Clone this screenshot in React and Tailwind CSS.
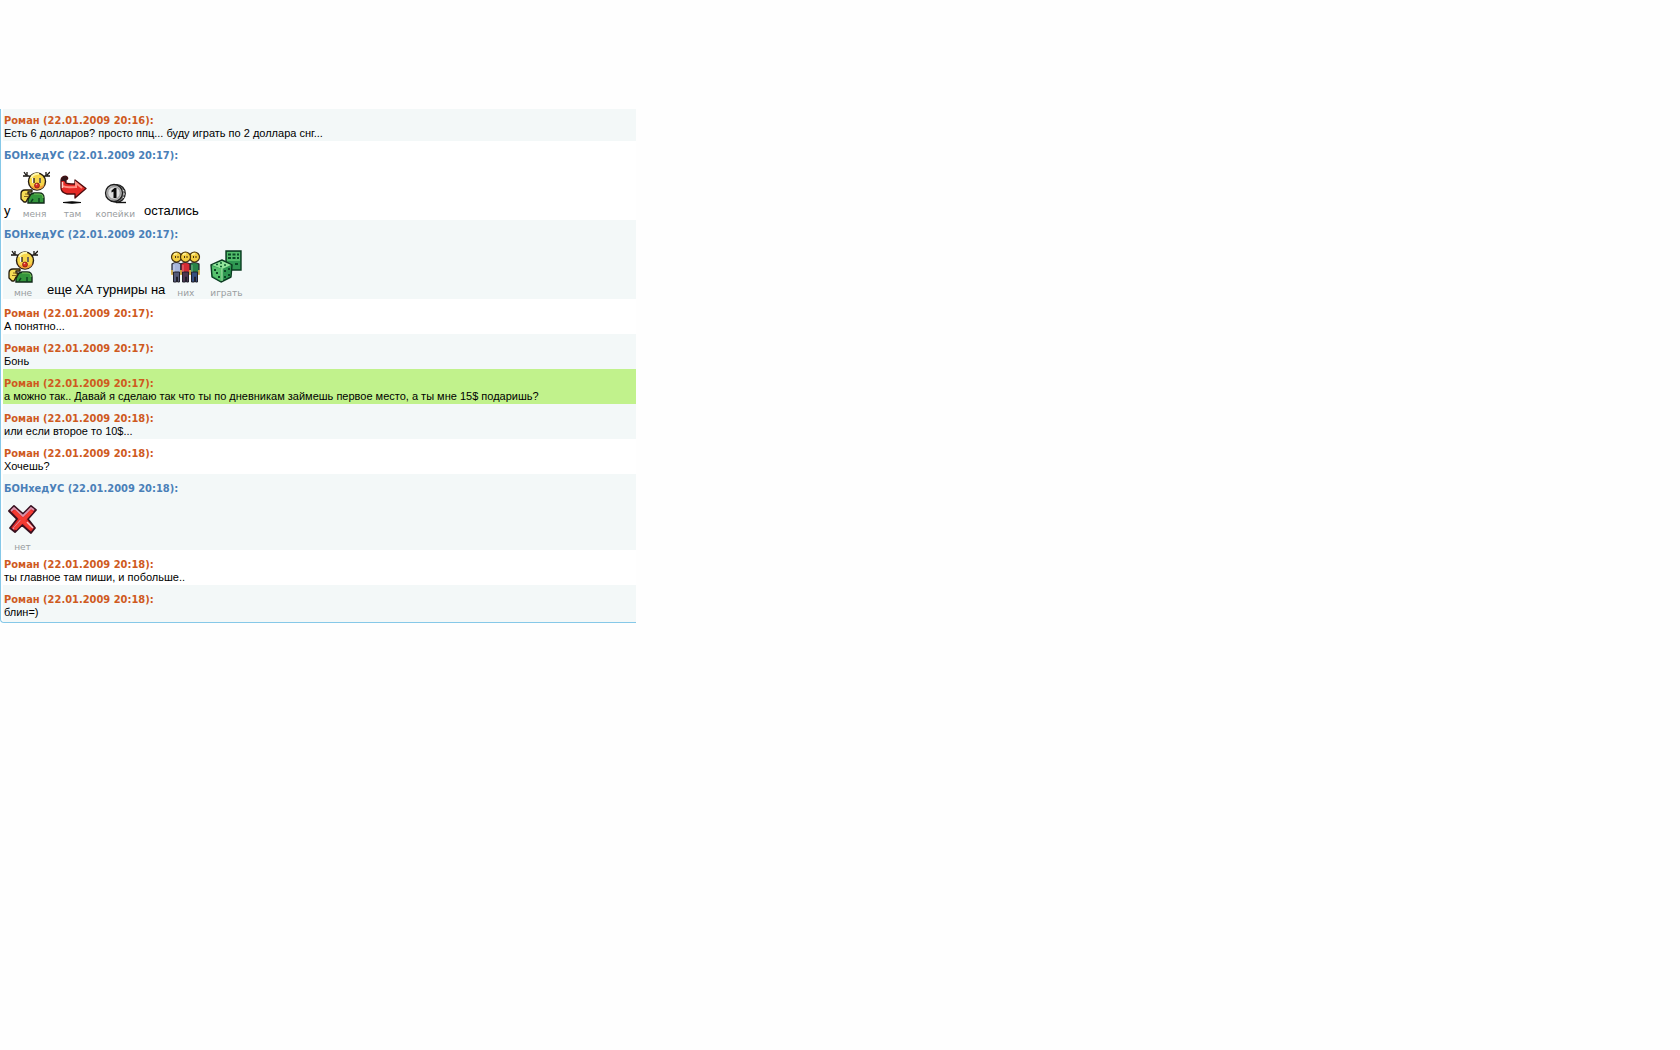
const BOLD = "font-['DejaVu_Sans_Condensed','DejaVu_Sans',sans-serif]";

function Reindeer() {
  return (
    <svg width="30" height="33" viewBox="0 0 30 33" aria-hidden="true">
      <path d="M4 1l2 3M7 1v4M3 5h6l3 2M30 1l-3 3M26 1v4M30 5h-5l-3 2" fill="none" stroke="#181510" strokeWidth="1.3" />
      <path d="M8 32v-3c0-4 2-6 6-7h5c4 0 5 3 5 5v5z" fill="#34963c" stroke="#102818" strokeWidth="1.4" />
      <path d="M14 23h5c4 0 4 2 4 4" fill="none" stroke="#76bd58" strokeWidth="1.2" />
      <path d="M19 27v5M11 31l2-3" fill="none" stroke="#0c4420" strokeWidth="1.5" />
      <circle cx="17" cy="10.500" r="8.500" fill="#f6d64a" stroke="#241b12" strokeWidth="1.4" />
      <path d="M9.500 13c2 3 9 5 15 0 0 6-12 9-15 0z" fill="#f4a13c" />
      <path d="M11 7c1-3 5-5 8-4" fill="none" stroke="#fff8a8" strokeWidth="2" />
      <path d="M12 7h2v5h-2zM19 7h2v5h-2z" fill="#fffbe2" />
      <path d="M14 7v5M20 7v5" stroke="#261a0c" strokeWidth="1.3" />
      <circle cx="17" cy="14.500" r="2.500" fill="#d92c20" stroke="#77180f" strokeWidth=".7" />
      <circle cx="16.500" cy="13.500" r=".8" fill="#ffb0a0" />
      <path d="M1 23c0-3 2-4 4-4h7v2H8v2h2v2H9v2H8l-2 4H4l-3-3z" fill="#f7dd55" stroke="#241b0c" strokeWidth="1.3" strokeLinejoin="round" />
      <path d="M5 23h4M4 25.500h4" stroke="#7b5918" strokeWidth=".9" />
    </svg>
  );
}

function TurnArrow() {
  return (
    <svg width="28" height="29" viewBox="0 0 28 29" aria-hidden="true">
      <path d="M4 27.500q9-1.500 18 0-9 1.500-18 0z" fill="#080808" stroke="#080808" />
      <path d="M2 5c0-3 4-5 6-3 1 1 1 2-1 3v3c1 1 3 1 9 1V5l11 8.500L16 23v-4H8c-4-1-6-3-6-6z" fill="#e52a26" stroke="#4b0c0e" strokeWidth="1.3" strokeLinejoin="round" />
      <path d="M2 6c0-4 4-6 6-4 1 1 0 2-1 3v3L5 6z" fill="#33161a" />
      <path d="M4 11c3 2 6 1 13 1V8l6 5" fill="none" stroke="#ff8f82" strokeWidth="2" />
      <path d="M3.500 7v6" stroke="#ffd6ce" strokeWidth="1.5" />
    </svg>
  );
}

function Coin() {
  return (
    <svg width="22" height="21" viewBox="0 0 22 21" aria-hidden="true">
      <path d="M12 19.500h10" stroke="#111" strokeWidth="1.4" />
      <circle cx="12.500" cy="10.500" r="8.800" fill="#808080" stroke="#1c1c1c" strokeWidth="1.2" />
      <path d="M18.500 7l2 1M19 11h2M18.500 14l2 1" stroke="#d0d0d0" strokeWidth="1" />
      <circle cx="10" cy="10" r="8.500" fill="#b4b4b4" stroke="#1c1c1c" strokeWidth="1.300" />
      <circle cx="10" cy="10" r="6.300" fill="#dedede" stroke="#909090" />
      <path d="M7.500 7.500l3-2.500h2v10h-3V8.500l-2 1z" fill="#080808" />
    </svg>
  );
}

function Person({ x, shirt, shade }) {
  return (
    <g transform={`translate(${x} 0)`}>
      <path d="M1 13q4-3 9 0v10H1z" fill={shirt} stroke="#20202c" strokeWidth="1.200" />
      <path d="M1 19v5M10 19v5" stroke="#edc14c" strokeWidth="1.500" />
      <path d="M2.500 21h6v10h-2v-5h-1v5h-3z" fill={shade} stroke="#20202c" strokeWidth="1" />
      <path d="M3 14v7" stroke="#ffffff" strokeOpacity=".4" />
      <circle cx="5.500" cy="6" r="5" fill="#f3ce42" stroke="#47330e" strokeWidth="1.200" />
      <path d="M3 4q1-2 3-1" fill="none" stroke="#fff5a0" strokeWidth="1.500" />
      <path d="M4.500 5v2M7 5v2" stroke="#4a3410" />
    </g>
  );
}

function People() {
  return (
    <svg width="31" height="32" viewBox="0 0 31 32" aria-hidden="true">
      <Person x={19} shirt="#278347" shade="#365080" />
      <Person x={1} shirt="#a7b5dc" shade="#545977" />
      <Person x={10} shirt="#d52c34" shade="#4d3650" />
    </svg>
  );
}

function Dice() {
  return (
    <svg width="32" height="33" viewBox="0 0 32 33" aria-hidden="true">
      <path d="M16 1h15v19H20l-4-8z" fill="#2f9852" stroke="#0b3d22" strokeWidth="1.400" />
      <path d="M17 2h13v9H17z" fill="#52bd6b" />
      <path d="M18 4.500h3M22.500 4.500h3M27 4.500h2M18 8h3M22.500 8h3M27 8h2M25 14h3" stroke="#0b4b26" strokeWidth="1.800" />
      <path d="M1 15l11-5 10 5-1 12-10 5-9-5z" fill="#2f9852" stroke="#0b3d22" strokeWidth="1.400" strokeLinejoin="round" />
      <path d="M2 15l10-4 9 4-9 4z" fill="#93e59b" />
      <path d="M2 16l10 3-1 12-8-5z" fill="#58c26e" />
      <path d="M12 19v12" stroke="#b8efb4" />
      <path d="M6 14.500h2M10 13h2M10 16.500h2M14 15h2" stroke="#0c6230" strokeWidth="1.400" />
      <path d="M5 19v2M9 26v2M7 22v2M15 20v2M19 18v2M15 26v2M19 24v2" stroke="#083e20" strokeWidth="1.800" />
    </svg>
  );
}

function Cross() {
  return (
    <svg width="29" height="29" viewBox="0 0 29 29" aria-hidden="true">
      <path d="M6 1l9 8 8-8 5 4-8 9 7 9-4 5-9-8-7 7-5-4 7-9-8-8z" fill="#df2929" stroke="#37101f" strokeWidth="1.800" strokeLinejoin="round" />
      <path d="M3 6l3-3 9 8 8-8 3 2M5 24l8-9" fill="none" stroke="#d894ac" strokeWidth="1.800" />
      <path d="M6 6l17 18M24 6L7 24" stroke="#f33b32" strokeWidth="3.500" />
      <path d="M19 17l6 6" stroke="#f9c6cb" strokeWidth="1.500" />
    </svg>
  );
}

function Sticker({ label, spacing = "gap-1.5", children }) {
  return (
    <figure className={`flex flex-col items-center ${spacing}`}>
      {children}
      <figcaption className="font-['DejaVu_Sans',sans-serif] text-[9px] leading-[9px] text-[#999da0]">{label}</figcaption>
    </figure>
  );
}

function Message({ me, time, tone = "bg-[#f3f8f8]", padding = "pt-2 pb-px", children }) {
  return (
    <article className={`ml-0.5 pl-px ${padding} ${tone}`}>
      <h2 className={`text-[11px] leading-[13px] font-bold ${BOLD} ${me ? "text-[#4a80b8]" : "text-[#cf5a1e]"}`}>
        {me ? "БОНхедУС" : "Роман"} (22.01.2009 {time}):
      </h2>
      {children}
    </article>
  );
}

function Line({ children }) {
  return <p className="text-[11px] leading-[13px]">{children}</p>;
}

export default function App() {
  return (
    <main className="min-h-screen bg-[#fefefe] pt-[109px] font-['Liberation_Sans',Arial,sans-serif] text-black">
      <section className="w-full max-w-[636px] rounded-bl-sm border-l border-b border-[#85c8e8]">
        <Message time="20:16" padding="pt-[5px] pb-px"><Line>Есть 6 долларов? просто ппц... буду играть по 2 доллара снг...</Line></Message>
        <Message me time="20:17" tone="bg-white">
          <div className="flex h-[57px] items-end gap-[9px] text-[13px]">
            <span className="leading-4">у</span>
            <Sticker label="меня"><Reindeer /></Sticker>
            <Sticker label="там"><TurnArrow /></Sticker>
            <Sticker label="копейки"><Coin /></Sticker>
            <span className="leading-4">остались</span>
          </div>
        </Message>
        <Message me time="20:17">
          <div className="flex h-[57px] items-end gap-[9px] pl-1 text-[13px]">
            <Sticker label="мне"><Reindeer /></Sticker>
            <div className="flex items-end gap-[5px]">
              <span className="leading-4">еще ХА турниры на</span>
              <Sticker label="них"><People /></Sticker>
            </div>
            <Sticker label="играть"><Dice /></Sticker>
          </div>
        </Message>
        <Message time="20:17" tone="bg-white"><Line>А понятно...</Line></Message>
        <Message time="20:17"><Line>Бонь</Line></Message>
        <Message time="20:17" tone="bg-[#c1f28c]"><Line>а можно так.. Давай я сделаю так что ты по дневникам займешь первое место, а ты мне 15$ подаришь?</Line></Message>
        <Message time="20:18"><Line>или если второе то 10$...</Line></Message>
        <Message time="20:18" tone="bg-white"><Line>Хочешь?</Line></Message>
        <Message me time="20:18" padding="pt-2">
          <div className="flex h-[55px] items-end pl-1">
            <Sticker label="нет" spacing="gap-[9px] -mb-0.5"><Cross /></Sticker>
          </div>
        </Message>
        <Message time="20:18" tone="bg-white"><Line>ты главное там пиши, и побольше..</Line></Message>
        <Message time="20:18" padding="pt-2 pb-[3px]"><Line>блин=)</Line></Message>
      </section>
    </main>
  );
}
